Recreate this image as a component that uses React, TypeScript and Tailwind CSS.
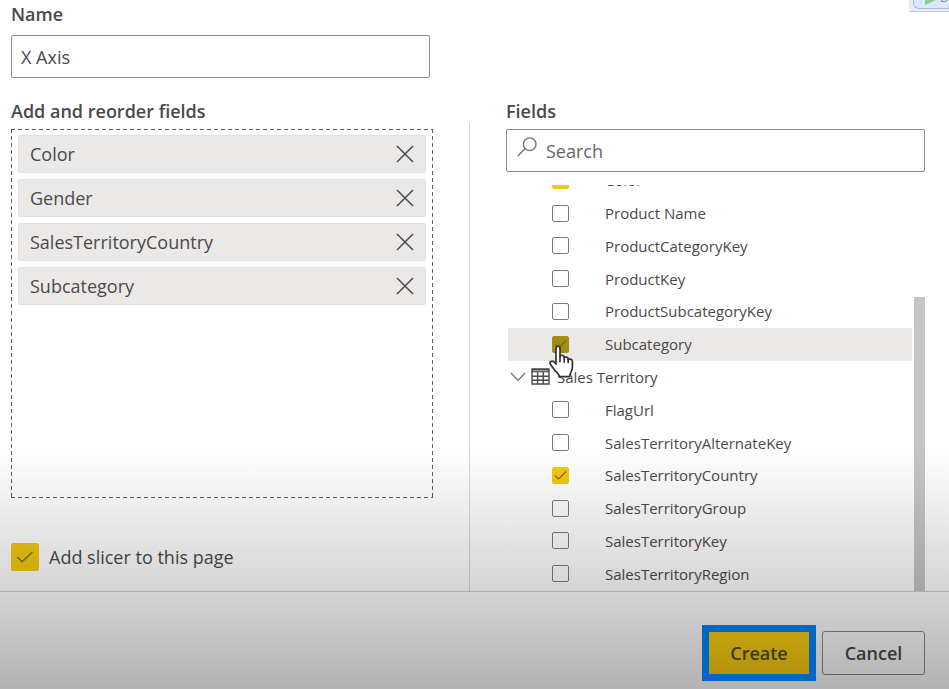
import { useState } from "react";
import type { ReactNode } from "react";

function CheckBox({
  id,
  checked,
  onChange,
  large = false,
  dim = false,
}: {
  id: string;
  checked: boolean;
  onChange: () => void;
  large?: boolean;
  dim?: boolean;
}) {
  const size = large ? "h-7 w-7" : "h-[17px] w-[17px]";
  const fill = dim ? "checked:border-[#a58d14] checked:bg-[#a58d14]" : "checked:border-[#f2c811] checked:bg-[#f2c811]";
  return (
    <span className={`grid shrink-0 place-items-center ${size}`}>
      <input
        id={id}
        type="checkbox"
        checked={checked}
        onChange={onChange}
        className={`col-start-1 row-start-1 appearance-none rounded-[2px] border border-[#7d7b79] bg-transparent ${size} ${fill}`}
      />
      {checked && (
        <svg
          viewBox="0 0 17 17"
          className={`pointer-events-none col-start-1 row-start-1 ${large ? "h-6 w-6" : "h-[17px] w-[17px]"}`}
          fill="none"
          stroke="#7a6a14"
          strokeWidth={large ? 1 : 1.2}
        >
          <path d={large ? "M3.200 8.700 6.500 11.800 13.700 5" : "M3 8.500 6.500 12 14 4.500"} />
        </svg>
      )}
    </span>
  );
}

function CloseIcon() {
  return (
    <svg viewBox="0 0 18 18" className="h-[18px] w-[18px]" fill="none" stroke="#4a4a4a" strokeWidth="1.5">
      <path d="M1 1 17 17M17 1 1 17" />
    </svg>
  );
}

function SearchIcon() {
  return (
    <svg viewBox="0 0 20 20" className="h-5 w-5" fill="none" stroke="#777" strokeWidth="1.4">
      <circle cx="12.7" cy="7.2" r="6.3" />
      <path d="M8.2 11.6.8 19" />
    </svg>
  );
}

function TableIcon() {
  return (
    <svg viewBox="0 0 19 17" className="h-[17px] w-[19px]" fill="none" stroke="#4a4a4a" strokeWidth="1.4">
      <path d="M1 1h17v15H1zM1 8.300h17M1 12.200h17M6.600 4v12M12.300 4v12" />
      <path d="M1 2.600h17" strokeWidth="3.400" />
      <path d="M2 2.700h15" stroke="#a8a8a8" strokeWidth="1.200" />
    </svg>
  );
}

function HandCursor() {
  return (
    <svg
      viewBox="0 0 26 34"
      className="pointer-events-none absolute left-[41px] top-[17px] h-[34px] w-[26px]"
      fill="#fff"
      stroke="#333"
      strokeWidth="1.7"
      strokeLinejoin="round"
      strokeLinecap="round"
    >
      <path d="M7 3c0-2.600 4-2.600 4 0v8.500c.6-1.900 3.900-1.500 4.200.5v1c.7-1.600 3.700-1.200 4 .8v1c.8-1.300 4-1 4.200 1.400V22.500c0 3.800-2.700 4.500-2.700 9.200H10.500c0-2.700-3-4-5-6.700L1.300 19c-1.200-2.200 1.600-3.900 3.500-2.300L7 19z" />
      <path d="M11 11.500v5M15.200 12.500v4.500M19.200 14v3.500" fill="none" />
    </svg>
  );
}

const tableFields = [
  "Color",
  "Product Name",
  "ProductCategoryKey",
  "ProductKey",
  "ProductSubcategoryKey",
  "Subcategory",
];

const territoryFields = [
  "FlagUrl",
  "SalesTerritoryAlternateKey",
  "SalesTerritoryCountry",
  "SalesTerritoryGroup",
  "SalesTerritoryKey",
  "SalesTerritoryRegion",
];

function FieldRow({
  name,
  checked,
  onToggle,
  children,
}: {
  name: string;
  checked: boolean;
  onToggle: () => void;
  children?: ReactNode;
}) {
  const active = name === "Subcategory";
  return (
    <li className={`relative ml-0.5 flex items-center pl-11 ${active ? "z-10 bg-[#ebe9e8]" : ""}`}>
      <CheckBox id={`field-${name}`} checked={checked} onChange={onToggle} dim={active} />
      <label htmlFor={`field-${name}`} className="pl-9 text-[15px] leading-6">
        {name}
      </label>
      {children}
    </li>
  );
}

export default function App() {
  const [name, setName] = useState("X Axis");
  const [slicer, setSlicer] = useState(true);
  const [selected, setSelected] = useState(["Color", "Gender", "SalesTerritoryCountry", "Subcategory"]);

  const toggle = (field: string) =>
    setSelected((list) => (list.includes(field) ? list.filter((f) => f !== field) : [...list, field]));

  return (
    <div className="relative flex min-h-screen flex-col overflow-hidden bg-white font-['Open_Sans','Noto_Sans',sans-serif] text-[#4a4a4a]">
      <main className="grid flex-1 grid-cols-[422fr_1px_419fr] gap-x-9 pl-[11px] pr-6">
        <section className="flex flex-col pb-5 pt-0.5">
          <label htmlFor="name" className="mb-[9px] h-6 text-lg font-semibold leading-6">
            Name
          </label>
          <input
            id="name"
            value={name}
            onChange={(e) => setName(e.target.value)}
            className="mr-[3px] h-[43px] rounded-[2px] border border-[#8c8c8c] px-[9px] text-lg outline-none"
          />
          <h2 className="mb-1 mt-[19px] h-7 text-lg font-semibold leading-7">Add and reorder fields</h2>
          <ul className="flex flex-1 flex-col gap-1.5 bg-[repeating-linear-gradient(90deg,#606060_0_4px,transparent_4px_7px),repeating-linear-gradient(90deg,#606060_0_4px,transparent_4px_7px),repeating-linear-gradient(180deg,#606060_0_4px,transparent_4px_7px),repeating-linear-gradient(180deg,#606060_0_4px,transparent_4px_7px)] bg-[length:100%_1px,100%_1px,1px_100%,1px_100%] bg-[position:top,bottom,left,right] bg-no-repeat p-[7px] pt-1.5">
            {selected.map((field) => (
              <li
                key={field}
                className="flex h-[38px] items-center justify-between rounded-[2px] border border-[#e3e1df] bg-[#ebe9e8] px-[11px] text-lg"
              >
                {field}
                <button type="button" aria-label={`Remove ${field}`} onClick={() => toggle(field)}>
                  <CloseIcon />
                </button>
              </li>
            ))}
          </ul>
          <div className="mt-[45px] flex items-center gap-2.5">
            <CheckBox id="slicer" checked={slicer} onChange={() => setSlicer(!slicer)} large />
            <label htmlFor="slicer" className="text-lg leading-7">
              Add slicer to this page
            </label>
          </div>
        </section>

        <div className="mt-[122px] bg-[#dadada]" />

        <section className="flex flex-col pt-[97px]">
          <label htmlFor="search" className="mb-1 h-7 text-lg font-semibold leading-7">
            Fields
          </label>
          <div className="flex h-[43px] items-start gap-[9px] rounded-[2px] border border-[#8c8c8c] pl-2.5 pt-[7px]">
            <SearchIcon />
            <input
              id="search"
              placeholder="Search"
              className="h-7 min-w-0 flex-1 bg-transparent text-lg leading-7 outline-none placeholder:text-[#666]"
            />
          </div>
          <div className="mt-[13px] flex h-[406px] items-end gap-0.5 overflow-hidden">
            <ul className="mb-px grid h-[426px] flex-1 auto-rows-fr">
              {tableFields.map((f) => (
                <FieldRow key={f} name={f} checked={selected.includes(f)} onToggle={() => toggle(f)}>
                  {f === "Subcategory" && <HandCursor />}
                </FieldRow>
              ))}
              <li className="flex items-center pl-1 text-[15px] leading-6">
                <button type="button" aria-label="Collapse Sales Territory">
                  <svg viewBox="0 0 16 10" className="h-2.5 w-4" fill="none" stroke="#777" strokeWidth="1.3">
                    <path d="M1 1 8 8.500 15 1" />
                  </svg>
                </button>
                <span className="pl-[5px] pr-[7px]">
                  <TableIcon />
                </span>
                Sales Territory
              </li>
              {territoryFields.map((f) => (
                <FieldRow key={f} name={f} checked={selected.includes(f)} onToggle={() => toggle(f)} />
              ))}
            </ul>
            <div className="h-[294px] w-[11px] bg-[#c6c6c6]" />
          </div>
        </section>
      </main>

      <footer className="flex h-[98px] items-start justify-end border-t border-[#d0d0d0] pr-6 pt-[33px]">
        <div className="flex items-center gap-1.5">
          <button
            type="button"
            className="z-20 h-14 w-[114px] border-[7px] border-[#0067c0] bg-linear-to-b from-[#c5a30f] to-[#b3930c] text-lg font-semibold text-[#40380f]"
          >
            Create
          </button>
          <button type="button" className="h-11 w-[103px] rounded-[3px] border border-[#8c8c8c] text-lg font-semibold">
            Cancel
          </button>
        </div>
      </footer>

      <div className="absolute right-0 top-0 h-3 w-10 overflow-hidden border-b border-[#c3cad8] bg-[#e6ebf5] pl-1">
        <div className="flex h-[9px] items-end gap-1 overflow-hidden rounded-bl-md border-b border-l border-[#a9bbdc] bg-[#dce8fa] pl-2.5">
          <svg viewBox="0 0 12 9" className="h-[9px] w-3 shrink-0 self-start">
            <path d="M1 0h11L1 5z" fill="#8fc79a" />
          </svg>
          <span className="pb-1 text-xs leading-3 text-[#8793ad]">D</span>
        </div>
      </div>
      <div className="pointer-events-none absolute inset-x-0 bottom-0 z-10 h-[244px] bg-[linear-gradient(180deg,rgba(0,0,0,0)_0%,rgba(0,0,0,0.17)_60%,rgba(0,0,0,0.3)_100%)]" />
    </div>
  );
}
